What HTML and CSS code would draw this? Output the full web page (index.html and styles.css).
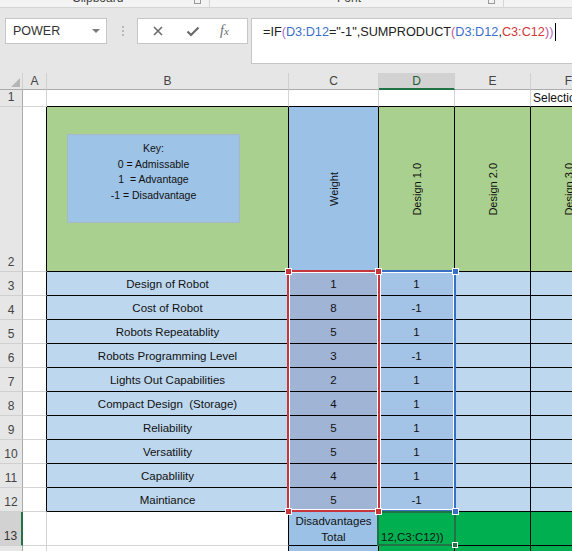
FILE: index.html
```html
<!DOCTYPE html>
<html lang="en">
<head>
    <meta charset="UTF-8">
    <title>Selection Matrix</title>
    <link rel="stylesheet" href="styles.css">
</head>
<body>
    <div class="ribbon-edge">
        <div class="group group-clip">
            <span class="group-label">Clipboard</span>
            <span class="launcher"></span>
        </div>
        <div class="group group-font">
            <span class="group-label">Font</span>
            <span class="launcher"></span>
        </div>
    </div>

    <div class="formula-bar">
        <div class="name-box">POWER<span class="caret"></span></div>
        <div class="grip"></div>
        <div class="fx-buttons">
            <svg class="btn-icon" width="12" height="12" viewBox="0 0 12 12"><path d="M2 2 L10 10 M10 2 L2 10" stroke="#6b6b6b" stroke-width="1.6" fill="none"/></svg>
            <svg class="btn-icon" width="14" height="12" viewBox="0 0 14 12"><path d="M1.5 6.5 L5 10 L12.5 2.5" stroke="#6b6b6b" stroke-width="2.2" fill="none"/></svg>
            <span class="fx"><i>f</i><i class="fx-x">x</i></span>
        </div>
        <div class="formula-input">
            <span>=IF</span><span class="paren">(</span><span class="ref-blue">D3:D12</span>="-1",SUMPRODUCT<span class="paren2">(</span><span class="ref-blue">D3:D12</span>,<span class="ref-red">C3:C12</span><span class="paren2">)</span><span class="paren">)</span><span class="cursor"></span>
        </div>
    </div>

    <div class="sheet-wrap">
        <div class="sheet">
            <!-- column headers -->
            <div class="cell col-head corner"><svg width="9" height="9" viewBox="0 0 9 9"><polygon points="9,0 9,9 0,9" fill="#b5b5b5"/></svg></div>
            <div class="cell col-head">A</div>
            <div class="cell col-head">B</div>
            <div class="cell col-head">C</div>
            <div class="cell col-head col-active">D</div>
            <div class="cell col-head">E</div>
            <div class="cell col-head">F</div>

            <!-- row 1 -->
            <div class="cell row-head">1</div>
            <div class="cell"></div>
            <div class="cell line-bottom"></div>
            <div class="cell line-bottom"></div>
            <div class="cell line-bottom"></div>
            <div class="cell line-bottom"></div>
            <div class="cell line-bottom title">Selection Matrix</div>

            <!-- row 2 -->
            <div class="cell row-head">2</div>
            <div class="cell line-right"></div>
            <div class="cell green boxed key-cell">
                <div class="key">
                    Key:<br>
                    0 = Admissable<br>
                    1 &nbsp;= Advantage<br>
                    -1 = Disadvantage
                </div>
            </div>
            <div class="cell blue boxed"><span class="vert">Weight</span></div>
            <div class="cell green boxed"><span class="vert">Design 1.0</span></div>
            <div class="cell green boxed"><span class="vert">Design 2.0</span></div>
            <div class="cell green boxed"><span class="vert">Design 3.0</span></div>

            <div class="cell row-head">3</div>
            <div class="cell line-right"></div>
            <div class="cell pale boxed">Design of Robot</div>
            <div class="cell weight boxed">1</div>
            <div class="cell score boxed">1</div>
            <div class="cell pale boxed"></div>
            <div class="cell pale boxed"></div>

            <div class="cell row-head">4</div>
            <div class="cell line-right"></div>
            <div class="cell pale boxed">Cost of Robot</div>
            <div class="cell weight boxed">8</div>
            <div class="cell score boxed">-1</div>
            <div class="cell pale boxed"></div>
            <div class="cell pale boxed"></div>

            <div class="cell row-head">5</div>
            <div class="cell line-right"></div>
            <div class="cell pale boxed">Robots Repeatablity</div>
            <div class="cell weight boxed">5</div>
            <div class="cell score boxed">1</div>
            <div class="cell pale boxed"></div>
            <div class="cell pale boxed"></div>

            <div class="cell row-head">6</div>
            <div class="cell line-right"></div>
            <div class="cell pale boxed">Robots Programming Level</div>
            <div class="cell weight boxed">3</div>
            <div class="cell score boxed">-1</div>
            <div class="cell pale boxed"></div>
            <div class="cell pale boxed"></div>

            <div class="cell row-head">7</div>
            <div class="cell line-right"></div>
            <div class="cell pale boxed">Lights Out Capabilities</div>
            <div class="cell weight boxed">2</div>
            <div class="cell score boxed">1</div>
            <div class="cell pale boxed"></div>
            <div class="cell pale boxed"></div>

            <div class="cell row-head">8</div>
            <div class="cell line-right"></div>
            <div class="cell pale boxed">Compact Design &nbsp;(Storage)</div>
            <div class="cell weight boxed">4</div>
            <div class="cell score boxed">1</div>
            <div class="cell pale boxed"></div>
            <div class="cell pale boxed"></div>

            <div class="cell row-head">9</div>
            <div class="cell line-right"></div>
            <div class="cell pale boxed">Reliability</div>
            <div class="cell weight boxed">5</div>
            <div class="cell score boxed">1</div>
            <div class="cell pale boxed"></div>
            <div class="cell pale boxed"></div>

            <div class="cell row-head">10</div>
            <div class="cell line-right"></div>
            <div class="cell pale boxed">Versatility</div>
            <div class="cell weight boxed">5</div>
            <div class="cell score boxed">1</div>
            <div class="cell pale boxed"></div>
            <div class="cell pale boxed"></div>

            <div class="cell row-head">11</div>
            <div class="cell line-right"></div>
            <div class="cell pale boxed">Capablility</div>
            <div class="cell weight boxed">4</div>
            <div class="cell score boxed">1</div>
            <div class="cell pale boxed"></div>
            <div class="cell pale boxed"></div>

            <div class="cell row-head">12</div>
            <div class="cell line-right"></div>
            <div class="cell pale boxed">Maintiance</div>
            <div class="cell weight boxed">5</div>
            <div class="cell score boxed">-1</div>
            <div class="cell pale boxed"></div>
            <div class="cell pale boxed"></div>

            <!-- row 13 -->
            <div class="cell row-head row-active">13</div>
            <div class="cell"></div>
            <div class="cell line-right"></div>
            <div class="cell blue boxed total">Disadvantages<br>Total</div>
            <div class="cell bright boxed editing">12,C3:C12))</div>
            <div class="cell bright boxed"></div>
            <div class="cell bright boxed"></div>

            <!-- row 14 -->
            <div class="cell row-head">14</div>
            <div class="cell"></div>
            <div class="cell line-right"></div>
            <div class="cell blue boxed"></div>
            <div class="cell bright boxed"></div>
            <div class="cell bright boxed"></div>
            <div class="cell bright boxed"></div>
        </div>

        <!-- formula reference highlights -->
        <div class="range range-blue"></div>
        <div class="range range-red"></div>
        <div class="active-cell"></div>
        <span class="handle red-h" style="left: 285px; top: 195px;"></span>
        <span class="handle red-h" style="left: 375px; top: 195px;"></span>
        <span class="handle red-h" style="left: 285px; top: 435px;"></span>
        <span class="handle blue-h" style="left: 452px; top: 195px;"></span>
        <span class="handle blue-h" style="left: 452px; top: 435px;"></span>
        <span class="handle red-h" style="left: 375px; top: 435px;"></span>
        <span class="handle fill-h" style="left: 452px; top: 469px;"></span>
    </div>
</body>
</html>
```

FILE: styles.css
```css
body {
    margin: 0;
    width: 572px;
    height: 551px;
    overflow: hidden;
    background-color: #e6e6e6;
    font-family: "Liberation Sans", Arial, sans-serif;
}

/* bottom edge of the ribbon */
.ribbon-edge {
    height: 7px;
    display: flex;
    background-color: #f3f3f3;
    border-bottom: 1px solid #d5d5d5;
    overflow: hidden;
}

.group {
    display: flex;
    align-items: flex-start;
    border-right: 1px solid #d5d5d5;
    box-sizing: border-box;
}

.group-clip {
    width: 210px;
    padding-left: 72px;
}

.group-font {
    width: 294px;
    padding-left: 127px;
}

.group-label {
    font-size: 12px;
    line-height: 12px;
    margin-top: -8px;
    color: #444;
}

.launcher {
    margin-left: auto;
    margin-right: 8px;
    width: 5px;
    height: 3px;
    border: 1px solid #999;
    border-top: none;
}

/* name box + formula bar */
.formula-bar {
    height: 65px;
    display: flex;
    align-items: flex-start;
    padding-top: 10px;
    box-sizing: border-box;
}

.name-box {
    margin-left: 5px;
    width: 102px;
    height: 26px;
    box-sizing: border-box;
    background: #fff;
    border: 1px solid #c6c6c6;
    display: flex;
    align-items: center;
    padding-left: 7px;
    font-size: 12.5px;
    color: #333;
}

.caret {
    margin-left: auto;
    margin-right: 6px;
    border-left: 4px solid transparent;
    border-right: 4px solid transparent;
    border-top: 4px solid #7a7a7a;
}

.grip {
    margin-left: 15px;
    margin-top: 8px;
    height: 10px;
    border-left: 2px dotted #b8b8b8;
}

.fx-buttons {
    margin-left: 13px;
    width: 111px;
    height: 26px;
    box-sizing: border-box;
    background: #fff;
    border: 1px solid #c6c6c6;
    display: flex;
    align-items: center;
    padding-left: 14px;
    gap: 22px;
}

.fx {
    font-family: "Liberation Serif", serif;
    font-size: 14px;
    color: #6b6b6b;
    margin-left: -2px;
}

.fx-x {
    font-size: 11px;
}

.formula-input {
    margin-left: 3px;
    flex: 1;
    height: 46px;
    box-sizing: border-box;
    background: #fff;
    border: 1px solid #c6c6c6;
    border-right: none;
    padding: 4px 0 0 11px;
    font-size: 12.7px;
    line-height: 18px;
    color: #222;
    white-space: nowrap;
}

.ref-blue { color: #3b6fc9; }
.ref-red { color: #d0393b; }
.paren { color: #a872c8; }
.paren2 { color: #c4569a; }

.cursor {
    display: inline-block;
    width: 1px;
    height: 18px;
    margin-left: 2px;
    background: #000;
    vertical-align: top;
}

/* worksheet grid */
.sheet-wrap {
    position: relative;
}

.sheet {
    display: grid;
    grid-template-columns: 23px 24px 242px 90px 76px 76px 76px;
    grid-template-rows: 17px 17px 165px repeat(10, 24px) 34px 24px;
    width: max-content;
}

.cell {
    box-sizing: border-box;
    border-right: 1px solid #d4d4d4;
    border-bottom: 1px solid #d4d4d4;
    background-color: #fff;
    display: flex;
    align-items: center;
    justify-content: center;
    overflow: hidden;
    white-space: nowrap;
    font-size: 11.5px;
    color: #111;
}

.col-head {
    background-color: #e6e6e6;
    border-right-color: #d0d0d0;
    border-bottom-color: #ababab;
    font-size: 12px;
    color: #444;
}

.corner {
    align-items: flex-end;
    justify-content: flex-end;
    padding: 0 2px 2px 0;
}

.col-active {
    background-color: #d2d2d2;
    border-bottom: 2px solid #217346;
    color: #1e5c38;
}

.row-head {
    background-color: #e6e6e6;
    border-right-color: #ababab;
    border-bottom-color: #d0d0d0;
    align-items: flex-end;
    padding-bottom: 2px;
    font-size: 12px;
    color: #444;
}

.row-active {
    background-color: #d2d2d2;
    border-right: 2px solid #217346;
    color: #333;
}

.line-bottom { border-bottom-color: #000; }
.line-right { border-right-color: #000; }

.boxed {
    border-right-color: #000;
    border-bottom-color: #000;
}

.green { background-color: #a9d08e; }
.blue { background-color: #9bc2e6; }
.pale { background-color: #bdd7ee; }
.weight { background-color: #a0b4d6; }
.score { background-color: #a3c4e6; }
.bright { background-color: #00b050; }

.title {
    justify-content: flex-start;
    padding-left: 2px;
    font-size: 12px;
    overflow: visible;
}

.key-cell {
    align-items: flex-start;
    justify-content: flex-start;
}

.key {
    margin: 27px 0 0 20px;
    width: 173px;
    height: 89px;
    box-sizing: border-box;
    padding-top: 6px;
    background-color: #9dc3e6;
    border: 1px solid #a9b6c4;
    text-align: center;
    font-size: 10.5px;
    line-height: 15.5px;
    color: #111;
}

.vert {
    writing-mode: vertical-rl;
    transform: rotate(180deg);
    font-size: 11px;
}

.total {
    text-align: center;
    line-height: 16px;
}

.editing {
    align-items: flex-end;
    justify-content: flex-start;
    padding: 0 0 2px 2px;
}

/* formula reference ranges and active cell */
.range {
    position: absolute;
    top: 197px;
    height: 242px;
    box-sizing: border-box;
}

.range-red {
    left: 287px;
    width: 93px;
    border: 2px solid #c8363d;
    box-shadow: inset 0 0 0 1px #fff;
}

.range-blue {
    left: 378px;
    width: 78px;
    border: 2px solid #3a6fc6;
    box-shadow: inset 0 0 0 1px #fff;
}

.active-cell {
    position: absolute;
    left: 377px;
    top: 438px;
    width: 79px;
    height: 35px;
    box-sizing: border-box;
    border: 2px solid #217346;
}

.handle {
    position: absolute;
    width: 7px;
    height: 7px;
    box-sizing: border-box;
    border: 1px solid #fff;
}

.red-h { background-color: #c8363d; }
.blue-h { background-color: #3a6fc6; }
.fill-h { background-color: #217346; width: 6px; height: 6px; }
```
